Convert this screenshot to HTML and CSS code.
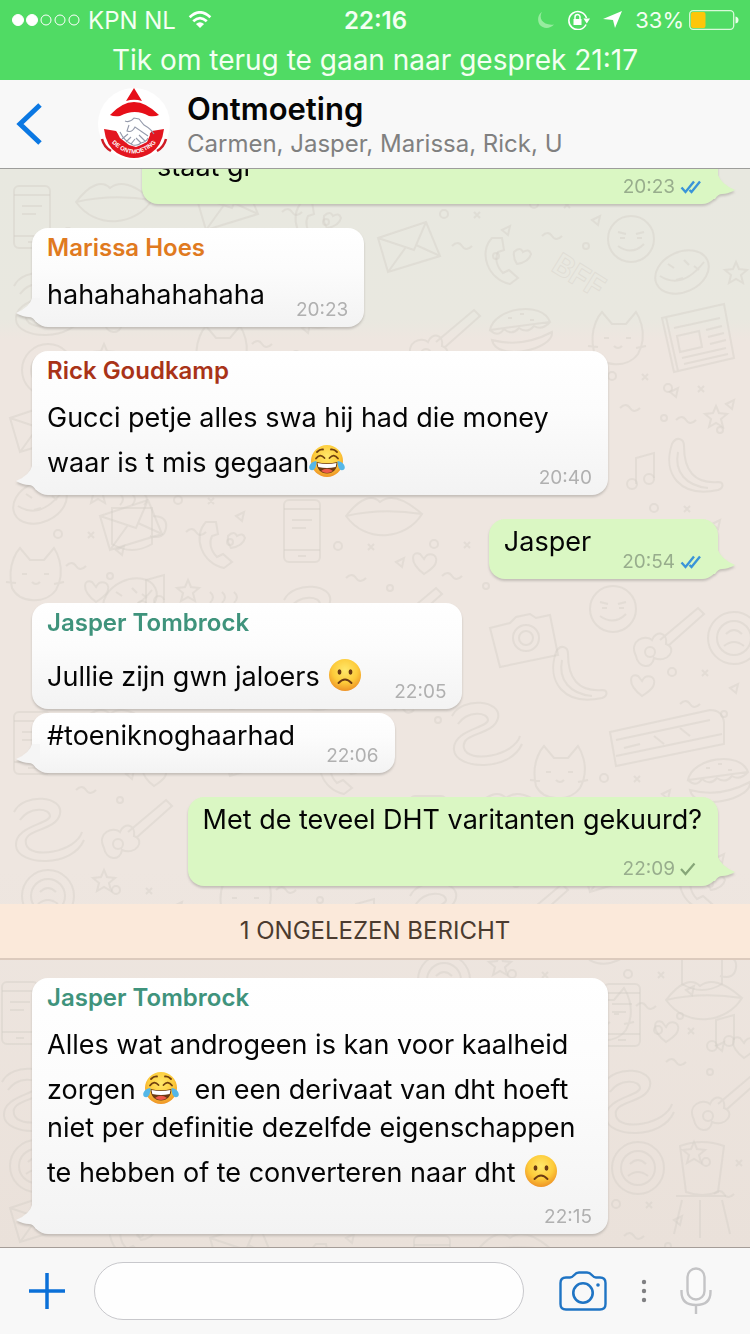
FILE: index.html
```html
<!DOCTYPE html>
<html lang="nl">
<head>
<meta charset="utf-8">
<meta name="viewport" content="width=device-width, initial-scale=1">
<title>Ontmoeting</title>
<link rel="stylesheet" href="styles.css">
</head>
<body>
<svg class="sprite" aria-hidden="true">
  <defs>
    <radialGradient id="face" cx="50%" cy="35%" r="65%">
      <stop offset="0" stop-color="#ffe86b"/><stop offset=".6" stop-color="#fdcb3a"/><stop offset="1" stop-color="#ee9326"/>
    </radialGradient>
    <symbol id="joy" viewBox="0 0 36 34">
      <circle cx="18" cy="17" r="16" fill="url(#face)"/>
      <path d="M7.500 18q10.500 2.500 21 0c0 7-4.500 11.500-10.500 11.500S7.500 25 7.500 18z" fill="#6b3a12"/>
      <path d="M8.500 19q9.500 2.200 19 0l-.8 4q-8.700 1.800-17.400 0z" fill="#fff"/>
      <path d="M12 27q6-4.500 12 0-6 4-12 0z" fill="#ee5a4a"/>
      <path d="M7 14.500q4-5.500 8.500-.5M20.500 14q4.500-5 8.500.5M8 8q3-3 6-2.500M22 5.500q3-.5 6 2.500" fill="none" stroke="#70400f" stroke-width="1.800" stroke-linecap="round"/>
      <path d="M7.500 17c-4 .5-7 3-7.300 6.200C0 26 3.500 27.300 5.500 25c1.500-2 1.800-4.500 2-8zM28.500 17c4 .5 7 3 7.300 6.200.2 2.800-3.300 4.100-5.300 1.800-1.500-2-1.800-4.500-2-8z" fill="#55b7e8"/>
    </symbol>
    <symbol id="frown" viewBox="0 0 36 34">
      <circle cx="18" cy="17" r="16" fill="url(#face)"/>
      <ellipse cx="12.500" cy="14" rx="1.900" ry="2.700" fill="#6b3a12"/>
      <ellipse cx="23.500" cy="14" rx="1.900" ry="2.700" fill="#6b3a12"/>
      <path d="M11.500 25q6.500-7 13 0" fill="none" stroke="#6b3a12" stroke-width="1.900" stroke-linecap="round"/>
    </symbol>
    <symbol id="read" viewBox="0 0 22 14">
      <path d="M1.500 7.500l4 4.500L14 1.500M9.500 10l2 2L20 1.500" fill="none" stroke="#3a94d8" stroke-width="2.400"/>
    </symbol>
    <symbol id="sent" viewBox="0 0 22 14">
      <path d="M1 7l4.500 5L14.500 1.500" fill="none" stroke="#86a678" stroke-width="2.200"/>
    </symbol>
    <g id="d-envelope"><path d="M0 8L48-8 62 26 10 42zM0 8l36 12L48-8M10 42l18-25M62 26L38 15"/></g>
    <g id="d-phone"><path d="M4 0c-14 14-4 42 18 46l8-6-9-8-6 3C8 28 7 20 10 14l6-2-2-12z"/><path d="M26 14q6-6 9 0 6-4 8 2-2 8-14 10-4-6-3-12z"/></g>
    <g id="d-face"><circle cx="23" cy="23" r="23"/><path d="M10 16l8 2M28 18l8-2M10 30q14 10 26-2M12 22h5M29 22h5"/></g>
    <g id="d-planet"><ellipse cx="28" cy="24" rx="28" ry="20" transform="rotate(-25 28 24)"/><path d="M6 28q22 14 44-14M14 16l6 4M30 12l5 5M22 32l7-2M40 18l5 4"/></g>
    <g id="d-news"><path d="M0 10L62-4 72 50 12 64zM4 9l12 54M12 20l46-10M15 28l22-5 3 16-22 5zM44 22l16-4M46 29l16-4M48 36l16-4M20 50l44-10M22 56l44-10"/></g>
    <g id="d-banana"><path d="M4 4c-10 30 8 54 46 46 6-2 6-8 0-8C26 44 16 30 16 6 16-2 8-4 4 4zM10 12c-4 20 8 34 30 36"/></g>
    <g id="d-lips"><path d="M0 22c14-18 26-22 34-14 10-8 24-4 42 12-16 26-56 30-76 2zM0 22c26-6 50-6 76-2"/></g>
    <g id="d-mobile"><rect width="36" height="62" rx="5"/><path d="M0 9h36M0 50h36M14 56h8M8 20h20M8 28h14"/></g>
    <g id="d-guitar"><path d="M0 40c-8-16 10-22 16-16C20 14 32 16 30 28c12 4 2 20-12 14C16 54 2 52 0 40zM24 24L62-8l6 6-36 32"/><circle cx="14" cy="36" r="5"/></g>
    <g id="d-camera"><path d="M0 10l20-5 6-6 14-3 6 4 14-3 8 40-58 12z"/><circle cx="36" cy="20" r="13"/><circle cx="36" cy="20" r="7"/></g>
    <g id="d-train"><path d="M0 18L100-4q12 0 14 12v22L6 52zM6 26l94-20M14 34l16-4M6 42l106-22M44 22l10 8M70 14l10 8"/></g>
    <g id="d-burger"><path d="M0 22C4 0 52-8 60 14zM0 22q8 8 14-1 8 7 15-1 8 6 15-2 8 5 16-4M2 32q30 8 60-8c2 18-56 30-60 8zM18 10h4M30 6h4M40 12h4"/></g>
    <g id="d-mug"><path d="M0 0h40v36q-20 12-40 0zM40 8q16 0 14 12t-16 8M8-14q6 5 0 11M20-14q6 5 0 11M32-14q6 5 0 11"/></g>
    <g id="d-chair"><path d="M0 0q22-8 44 0l-6 46q-16 6-32 0zM-4 50h50M2 54l-8 34M42 54l8 34M20 54v38"/></g>
    <g id="d-ball"><circle cx="26" cy="26" r="26"/><circle cx="26" cy="26" r="17"/><path d="M18 22q8-8 16 0M16 34q10-8 20 0"/></g>
    <g id="d-cat"><path d="M0 40C-6 14 8 0 8 0l10 12h14L42 0s14 20 2 42C34 56 8 56 0 40zM10 26h5M32 26h5M20 34q4 4 8 0M-6 34l10 1M42 36l10-2"/></g>
    <g id="d-star"><path d="M10 0l3 7 8 1-6 5 2 8-7-4-7 4 2-8-6-5 8-1z"/></g>
    <g id="d-heart"><path d="M12 22C-4 10 0-2 8 2l4 5c4-8 14-5 12 3-1 6-8 9-12 12z"/></g>
    <g id="d-note"><path d="M6 30V4l18-5v25"/><circle cx="2" cy="30" r="5"/><circle cx="19" cy="25" r="5"/></g>
    <g id="d-snake"><path d="M0 10C10-10 50-6 46 12S8 26 12 42s50 8 56-12M6 18c10-14 30-12 30-4S0 24 2 44s56 22 68-6"/></g>
    <g id="d-bits"><circle cx="4" cy="4" r="4"/><path d="M34 2l6 6M40 2l-6 6M62 20l8-4-2 9zM12 36q6-6 10 0t10 0"/><circle cx="56" cy="46" r="3"/></g>
    <g id="cluster-a">
      <use href="#d-envelope" x="10" y="20"/><use href="#d-bits" x="84" y="8"/><use href="#d-phone" x="112" y="34"/><use href="#d-planet" x="12" y="88"/><use href="#d-star" x="88" y="92"/><use href="#d-mug" x="112" y="118"/><use href="#d-bits" x="54" y="140"/><use href="#d-cat" x="12" y="158"/><use href="#d-heart" x="84" y="190"/><use href="#d-note" x="140" y="186"/>
    </g>
    <g id="cluster-b">
      <use href="#d-mobile" x="14" y="16"/><use href="#d-lips" x="76" y="10"/><use href="#d-bits" x="64" y="58"/><use href="#d-snake" x="14" y="106"/><use href="#d-guitar" x="104" y="112"/><use href="#d-heart" x="142" y="68"/><use href="#d-ball" x="22" y="174"/><use href="#d-star" x="94" y="174"/><use href="#d-bits" x="112" y="190"/>
    </g>
  </defs>
</svg>

<div class="status">
  <div class="status-row">
    <div class="status-left">
      <svg class="signal" viewBox="0 0 68 14" role="img" aria-label="Signaal"><g stroke="#fff" stroke-width="1"><circle cx="6" cy="7" r="5.500" fill="#fff"/><circle cx="20" cy="7" r="5.500" fill="#fff"/><circle cx="34" cy="7" r="5" fill="none"/><circle cx="48" cy="7" r="5" fill="none"/><circle cx="62" cy="7" r="5" fill="none"/></g></svg>
      <span>KPN NL</span>
      <svg class="wifi" viewBox="0 0 26 20" role="img" aria-label="Wifi"><path d="M1.500 7Q13-4 24.500 7M5.500 11.500Q13 4.500 20.500 11.500" fill="none" stroke="#fff" stroke-width="3"/><path d="M8.500 14.500Q13 10.500 17.500 14.500L13 19z" fill="#fff"/></svg>
    </div>
    <time class="clock">22:16</time>
    <div class="status-right">
      <svg class="moon" viewBox="0 0 18 18" aria-hidden="true"><path d="M5 1C1 7 6 15 17 13.500 13 18 6 18 2.500 13.500 0 9 1 3 5 1z" fill="#97ec9f"/></svg>
      <svg class="lock" viewBox="0 0 24 20" aria-hidden="true"><path d="M19 14.500A9 9 0 1 1 19.500 8" fill="none" stroke="#fff" stroke-width="1.600"/><path d="M16.500 8.500h6.500l-3.200 5z" fill="#fff"/><rect x="6.500" y="9" width="8" height="6" fill="#fff"/><path d="M8 9V7a2.500 2.500 0 0 1 5 0v2" fill="none" stroke="#fff" stroke-width="1.500"/></svg>
      <svg class="arrow" viewBox="0 0 20 18" aria-hidden="true"><path d="M19 0l-7 17-2-8L0 8z" fill="#fff"/></svg>
      <span class="percent">33%</span>
      <svg class="battery" viewBox="0 0 50 20" role="img" aria-label="Batterij"><rect x=".7" y=".7" width="44" height="18.600" rx="3.500" fill="none" stroke="#d9f9d9" stroke-width="1.300"/><rect x="2" y="2" width="14.500" height="16" rx="2" fill="#fdc60a"/><path d="M46.500 6.500q3 .5 3 3.500t-3 3.500z" fill="#eaffea"/></svg>
    </div>
  </div>
  <button class="call" type="button">Tik om terug te gaan naar gesprek 21:17</button>
</div>

<header class="nav">
  <button class="back" type="button" aria-label="Terug"><svg viewBox="0 0 26 42"><path d="M24 2L4 21l20 19" fill="none" stroke="#0b78e3" stroke-width="5"/></svg></button>
  <svg class="avatar" viewBox="0 0 72 72" role="img" aria-label="De Ontmoeting">
    <circle cx="36" cy="36" r="36" fill="#fff"/>
    <path d="M36 0l8 13q-8-2.500-16 0z" fill="#e60f19"/>
    <path d="M12 27Q24 14 36 14t25 13q-4 2-10 1-14-8-29 0-6 1-10-1z" fill="#e60f19"/>
    <path d="M6 41l12 2q18 24 36 0l12-2q-2 17-13 24-17 10-34 0Q8 58 6 41z" fill="#e31620"/>
    <path d="M4 51q2 8 9 12M68 51q-2 8-9 12" fill="none" stroke="#cf1c25" stroke-width="2.500"/>
    <path d="M22 36l9-5 8 0 10 7 3 9-3 7-6 3-5 2-7-2-9-7-3-6z" fill="#fff"/>
    <path d="M27 33q5 2 9-3l5 1 5 6q7 4 10 9M22 44q4 9 13 13 5 1 8-2 5-1 7-5M31 37l-2 6q5 2 8-4l13 9M30 46l-6 5M33 49l-5 5M37 51l-4 5M41 47l6 6M38 50l5 5" fill="none" stroke="#949aab" stroke-width="1.100"/>
    <path id="arc" d="M11 52Q36 79 61 52" fill="none"/>
    <text class="avatar-text"><textPath href="#arc" startOffset="50%">DE ONTMOETING</textPath></text>
  </svg>
  <div class="title">
    <h1>Ontmoeting</h1>
    <p>Carmen, Jasper, Marissa, Rick, U</p>
  </div>
</header>

<main class="chat">
  <svg class="doodles" aria-hidden="true">
    <use href="#cluster-b" x="0" y="170"/><use href="#cluster-a" x="186" y="168"/>
    <use href="#d-envelope" x="378" y="230"/><use href="#d-phone" x="488" y="238"/><use href="#d-face" x="608" y="216"/><use href="#d-planet" x="654" y="248"/><text x="550" y="270" transform="rotate(32 550 270)">BFF</text><use href="#d-star" x="726" y="262"/><use href="#d-bits" x="440" y="210"/><use href="#d-bits" x="530" y="200"/><use href="#d-news" x="662" y="308"/><use href="#d-guitar" x="412" y="318"/><use href="#d-burger" x="490" y="308"/><use href="#d-cat" x="594" y="312"/><use href="#d-bits" x="664" y="384"/><use href="#d-bits" x="608" y="372"/><use href="#d-banana" x="668" y="440"/><use href="#d-note" x="630" y="454"/><use href="#d-star" x="706" y="406"/>
    <use href="#cluster-a" x="0" y="390"/><use href="#cluster-b" x="270" y="484"/><use href="#cluster-a" x="90" y="488"/>
    <use href="#d-bits" x="430" y="540"/><use href="#d-bits" x="650" y="504"/>
    <use href="#d-camera" x="490" y="618"/><use href="#d-ball" x="708" y="612"/><use href="#d-face" x="590" y="586"/><use href="#d-banana" x="552" y="648"/><use href="#d-guitar" x="636" y="616"/><use href="#d-train" x="610" y="714"/><use href="#d-snake" x="452" y="706"/><use href="#d-bits" x="668" y="668"/><use href="#d-heart" x="630" y="674"/><use href="#d-burger" x="688" y="758"/><use href="#d-cat" x="536" y="746"/><use href="#d-bits" x="600" y="774"/>
    <use href="#cluster-b" x="0" y="696"/><use href="#cluster-b" x="396" y="780"/><use href="#cluster-a" x="210" y="714"/><use href="#cluster-a" x="570" y="830"/>
    <use href="#cluster-b" x="-12" y="966"/><use href="#cluster-b" x="590" y="968"/><use href="#d-chair" x="680" y="1146"/><use href="#d-bits" x="612" y="1200"/><use href="#cluster-a" x="0" y="1180"/><use href="#cluster-a" x="200" y="1210"/><use href="#cluster-b" x="400" y="1220"/>
  </svg>

  <article class="bubble out full">
    <div class="line"><p>staat gr</p><span class="meta"><time>20:23</time><svg class="tick"><use href="#read"/></svg></span></div>
  </article>

  <article class="bubble in named tail">
    <h2 class="orange">Marissa Hoes</h2>
    <div class="line"><p>hahahahahahaha</p><span class="meta"><time>20:23</time></span></div>
  </article>

  <article class="bubble in named tail">
    <h2 class="red">Rick Goudkamp</h2>
    <div class="line overlay"><p>Gucci petje alles swa hij had die money waar is t mis gegaan<svg class="emoji" role="img" aria-label="😂"><use href="#joy"/></svg></p><span class="meta"><time>20:40</time></span></div>
  </article>

  <article class="bubble out">
    <div class="line"><p>Jasper</p><span class="meta"><time>20:54</time><svg class="tick"><use href="#read"/></svg></span></div>
  </article>

  <article class="bubble in named">
    <h2 class="green">Jasper Tombrock</h2>
    <div class="line"><p>Jullie zijn gwn jaloers <svg class="emoji" role="img" aria-label="🙁"><use href="#frown"/></svg></p><span class="meta"><time>22:05</time></span></div>
  </article>

  <article class="bubble in tail grouped">
    <div class="line"><p>#toeniknoghaarhad</p><span class="meta"><time>22:06</time></span></div>
  </article>

  <article class="bubble out">
    <div class="line stacked"><p>Met de teveel DHT varitanten gekuurd?</p><span class="meta"><time>22:09</time><svg class="tick"><use href="#sent"/></svg></span></div>
  </article>

  <div class="unread">1 ONGELEZEN BERICHT</div>

  <article class="bubble in named tail last">
    <h2 class="green">Jasper Tombrock</h2>
    <div class="line stacked"><p>Alles wat androgeen is kan voor kaalheid zorgen <svg class="emoji" role="img" aria-label="😂"><use href="#joy"/></svg>&nbsp; en een derivaat van dht hoeft niet per definitie dezelfde eigenschappen te hebben of te converteren naar dht <svg class="emoji" role="img" aria-label="🙁"><use href="#frown"/></svg></p><span class="meta"><time>22:15</time></span></div>
  </article>
</main>

<footer class="composer">
  <button class="plus" type="button" aria-label="Toevoegen"><svg viewBox="0 0 36 36"><path d="M18 0v36M0 18h36" stroke="#0b70d8" stroke-width="3.500"/></svg></button>
  <input class="field" type="text" aria-label="Bericht">
  <button class="camera" type="button" aria-label="Camera"><svg viewBox="0 0 48 40"><path d="M7 6.500h4c4 0 4-5 9-5h8c5 0 5 5 9 5h4q5.500 0 5.500 5.500v21q0 5.500-5.500 5.500H7q-5.500 0-5.500-5.500V12q0-5.500 5.500-5.500z" fill="none" stroke="#1f74c4" stroke-width="2.400"/><circle cx="24" cy="22" r="9.700" fill="none" stroke="#1f74c4" stroke-width="2.600"/><circle cx="39" cy="14" r="1.800" fill="#1f74c4"/></svg></button>
  <button class="more" type="button" aria-label="Meer"><svg viewBox="0 0 6 24"><circle cx="3" cy="3" r="2.200"/><circle cx="3" cy="12" r="2.200"/><circle cx="3" cy="21" r="2.200"/></svg></button>
  <button class="mic" type="button" aria-label="Spraakbericht"><svg viewBox="0 0 32 48"><rect x="7.500" y="1.500" width="17" height="31" rx="8.500" fill="#fafafa" stroke="#c4c4c6" stroke-width="2.400"/><path d="M1.500 23v2q0 13 14.500 13t14.500-13v-2M16 38v9" fill="none" stroke="#c4c4c6" stroke-width="2.400"/></svg></button>
</footer>
</body>
</html>
```

FILE: styles.css
```css
* { box-sizing: border-box; }

body {
  margin: 0;
  height: 100vh;
  display: flex;
  flex-direction: column;
  overflow: hidden;
  font-family: Inter, "Liberation Sans", sans-serif;
  color: #050505;
  background: #f7f7f7;
}

h1, h2, p { margin: 0; }
svg { display: block; flex: none; }
button { border: 0; padding: 0; background: none; font: inherit; color: inherit; }
.sprite { position: absolute; width: 0; height: 0; }

.status {
  flex: none;
  background: #50db64;
  color: #f4fff2;
  font-size: 24px;
}
.status-row {
  display: grid;
  grid-template-columns: 1fr auto 1fr;
  align-items: center;
  height: 40px;
  padding: 0 11px 0 12px;
}
.status-left, .status-right { display: flex; align-items: center; }
.status-left { gap: 8px; }
.status-right { justify-content: flex-end; gap: 12px; }
.signal { width: 68px; height: 14px; }
.wifi { width: 24px; height: 18px; margin-left: 4px; }
.clock { font-weight: 600; }
.moon { width: 18px; height: 18px; }
.lock { width: 24px; height: 20px; }
.arrow { width: 20px; height: 18px; }
.percent { font-size: 22px; }
.battery { width: 50px; height: 20px; margin-left: -7px; }
.call {
  display: block;
  width: 100%;
  height: 40px;
  font-size: 28px;
  line-height: 40px;
  text-align: center;
}

.nav {
  flex: none;
  display: flex;
  align-items: center;
  height: 89px;
  padding: 0 16px;
  background: #f8f8f8;
  border-bottom: 1px solid #9d9d9b;
}
.back svg { width: 26px; height: 42px; }
.avatar { width: 72px; height: 72px; margin: 0 17px 0 56px; }
.avatar-text {
  font: 700 6px "Liberation Sans", sans-serif;
  fill: #fff;
  text-anchor: middle;
}
.title { padding-top: 4px; }
h1 { font-size: 31px; line-height: 36px; font-weight: 600; }
.title p { font-size: 24px; line-height: 34px; color: #808080; }

.chat {
  position: relative;
  flex: 1;
  min-height: 0;
  display: flex;
  flex-direction: column;
  justify-content: flex-end;
  overflow: hidden;
  padding: 0 32px 13px;
  background: linear-gradient(#e8e8e0, #e9e8e0 150px, #eee6e0 170px, #eee6e0 700px, #eae1da);
}
.doodles {
  position: absolute;
  left: 0;
  top: -169px;
  width: 100%;
  height: 1440px;
  fill: none;
  stroke: #d3ccc5;
  stroke-opacity: .4;
  stroke-width: 2;
}
.doodles text { font: 700 30px Inter, sans-serif; stroke-width: 1; }

.bubble {
  position: relative;
  flex: none;
  max-width: 576px;
  margin-bottom: 24px;
  padding: 4px 16px 0 15px;
  border-radius: 16px;
  filter: drop-shadow(0 2px 1px #a9a49e99);
}
.in { align-self: flex-start; background: linear-gradient(#fff, #fcfcfc 40%, #f3f3f3); }
.out { align-self: flex-end; background: #daf7c3; }
.full { width: 576px; }
.full .line { justify-content: space-between; }
.grouped { margin-top: -20px; }
.last { margin-bottom: 0; }

.tail::before, .out::before {
  content: "";
  position: absolute;
  bottom: 5px;
  width: 24px;
  height: 24px;
}
.tail::before {
  left: -16px;
  background: #f5f5f5;
  clip-path: path("M24 0 L16 0 Q14 9 0 15 Q7 19 13 19 Q17 19 20 24 L24 24 Z");
}
.out::before {
  right: -17px;
  background: #daf7c3;
  clip-path: path("M0 0 L7 0 Q10 9 24 15 Q17 19 11 19 Q7 19 4 24 L0 24 Z");
}

h2 {
  font-size: 24px;
  line-height: 32px;
  font-weight: 600;
  margin-bottom: 12px;
}
.orange { color: #e07a1f; }
.red { color: #a93318; }
.green { color: #3f937c; }

.line { position: relative; display: flex; align-items: flex-end; gap: 31px; }
.line p {
  font-size: 27px;
  line-height: 38px;
  padding-bottom: 18px;
}
.named .line p { padding-bottom: 13px; }
.overlay { display: grid; }
.overlay p, .overlay .meta { grid-area: 1 / 1; }
.overlay .meta { justify-self: end; }
.stacked { flex-direction: column; gap: 0; }
.stacked p { align-self: flex-start; }

.meta {
  display: flex;
  align-items: center;
  gap: 5px;
  height: 20px;
  margin: 2px 0 7px;
  font-size: 19px;
  line-height: 20px;
  color: #b0b0b0;
}
.out .meta { color: #98ad8d; }
.tick { width: 22px; height: 14px; }
.emoji {
  display: inline-block;
  width: 36px;
  height: 34px;
  margin-top: 7px;
  vertical-align: -6px;
}

.unread {
  position: relative;
  flex: none;
  margin: -6px -32px 18px;
  background: #fbe9da;
  border-bottom: 2px solid #dccabd;
  font-size: 24px;
  line-height: 54px;
  text-align: center;
  color: #4b3b2f;
}

.composer {
  flex: none;
  display: flex;
  align-items: center;
  height: 87px;
  padding: 0 38px 0 29px;
  background: #f8f8f8;
  border-top: 1px solid #a59d98;
}
.plus svg { width: 36px; height: 36px; }
.field {
  flex: 1;
  min-width: 0;
  height: 58px;
  margin: 0 35px 0 29px;
  padding: 0 24px;
  border: 1px solid #c8c8cc;
  border-radius: 29px;
  background: #fefefe;
  font: 27px Inter, sans-serif;
}
.camera svg { width: 48px; height: 40px; }
.more { margin: 0 33px 0 34px; }
.more svg { width: 6px; height: 24px; fill: #808083; }
.mic svg { width: 32px; height: 48px; }
```
